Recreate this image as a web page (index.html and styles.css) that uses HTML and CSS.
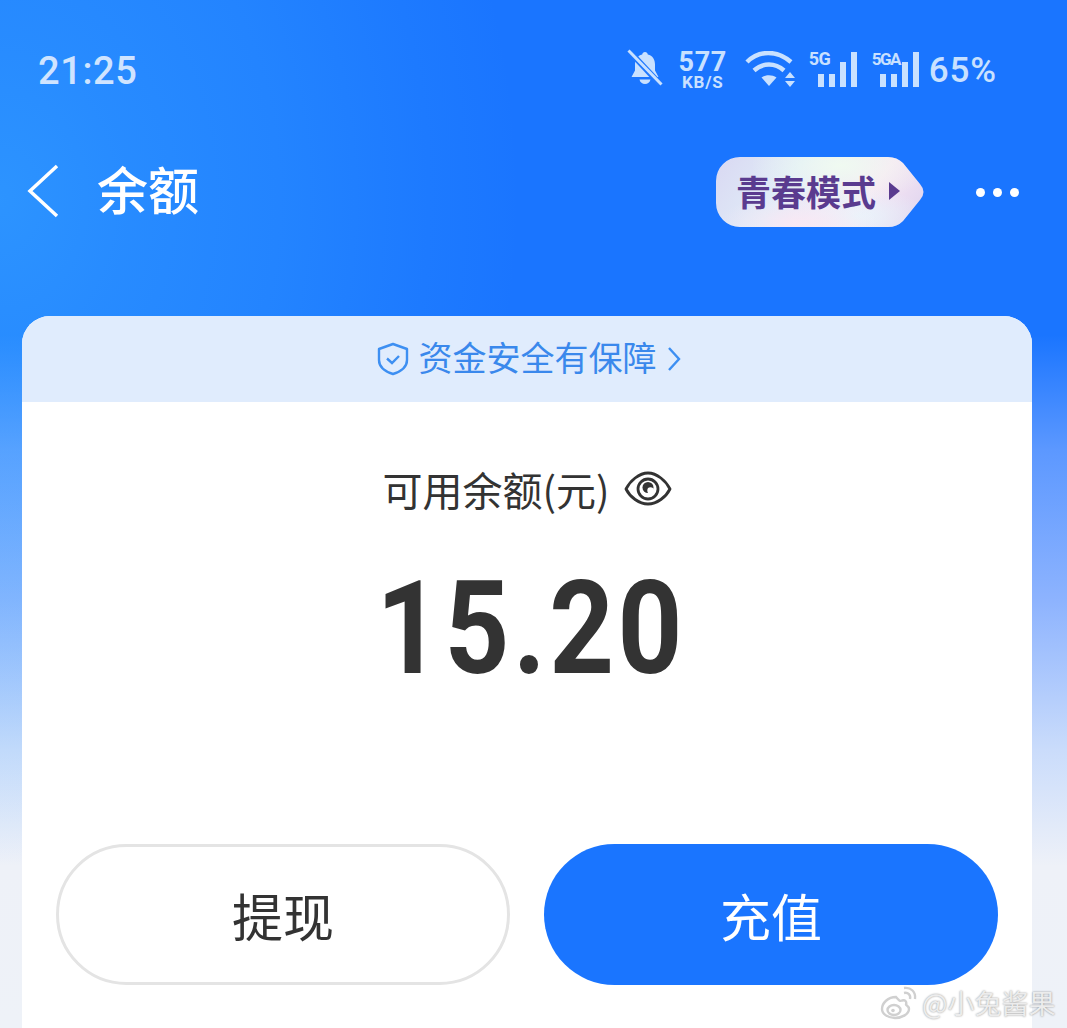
FILE: index.html
```html
<!DOCTYPE html>
<html lang="zh-CN">
<head>
<meta charset="utf-8">
<title>余额</title>
<link rel="stylesheet" href="styles.css">
</head>
<body>
<div class="screen">
  <header class="status">
    <div class="time">21:25</div>
    <div class="status-icons">
      <svg class="ic-bell" width="36" height="37" viewBox="0 0 36 37"><path d="M18 3c1.600 0 2.600 1 2.800 2.400 4.800 1.200 7.200 5 7.200 10v6l3.500 6.600H4.500L8 21.500v-6C8 10.400 10.500 6.600 15.200 5.400 15.400 4 16.400 3 18 3z" fill="#c9e1ff"/><path d="M12.500 30.500h11c-.6 2.800-2.700 4.500-5.500 4.500s-4.900-1.700-5.500-4.500z" fill="#c9e1ff"/><path d="M3 3l30 32" stroke="#1f78ff" stroke-width="6"/><path d="M1.500 1.500l33 34" stroke="#c9e1ff" stroke-width="3"/></svg>
      <div class="speed"><span class="speed-n">577</span><span class="speed-u">KB/S</span></div>
      <svg class="ic-wifi" width="52" height="36" viewBox="0 0 52 36"><path d="M3 11C15-1 33-1 47 11" class="wave"/><path d="M10 19.500c9-8 21-8 30 0" class="wave"/><path d="M25 35l-7.500-8.500c4.500-3 10.500-3 15 0z" fill="#c9e1ff"/><path d="M46 21l5 6H41zM46 36l5-6H41z" fill="#c9e1ff"/></svg>
      <div class="signal sig-5g"><span class="net">5G</span><div class="bars"><i class="b1"></i><i class="b2"></i><i class="b3"></i><i class="b4"></i></div></div>
      <div class="signal sig-5ga"><span class="net">5GA</span><div class="bars"><i class="b1"></i><i class="b2"></i><i class="b3"></i><i class="b4"></i></div></div>
      <div class="batt">65%</div>
    </div>
  </header>
  <nav class="nav">
    <svg class="back" width="32" height="54" viewBox="0 0 32 54"><path d="M30 2L3 27l27 25" fill="none" stroke="#fff" stroke-width="3.500"/></svg>
    <h1 class="title">余额</h1>
    <div class="spacer"></div>
    <div class="badge"><span class="badge-t">青春模式</span><span class="tri"></span></div>
    <div class="more"><i></i><i></i><i></i></div>
  </nav>
  <main class="card">
    <div class="safe">
      <svg width="32" height="34" viewBox="0 0 32 34"><path d="M16 2l14 5v11c0 7-6 11.500-14 14C8 29.500 2 25 2 18V7z" fill="none" stroke="#3d8ff2" stroke-width="2.400" stroke-linejoin="round"/><path d="M10 16.500l5 4.500 7-7" fill="none" stroke="#3d8ff2" stroke-width="2.400"/></svg>
      <span class="safe-t">资金安全有保障</span>
      <svg width="14" height="26" viewBox="0 0 14 26"><path d="M2 2l10 11L2 24" fill="none" stroke="#3d8ff2" stroke-width="2.400"/></svg>
    </div>
    <div class="label">
      <span>可用余额(元)</span>
      <svg width="48" height="38" viewBox="0 0 48 38"><path d="M2 19C6 11 15 3 24 3s18 8 22 16c-4 8-13 15-22 15S6 27 2 19z" fill="none" stroke="#333" stroke-width="2.800" stroke-linejoin="round"/><circle cx="24" cy="19" r="10" fill="none" stroke="#333" stroke-width="2.800"/><circle cx="24" cy="17.500" r="5.500" fill="#333"/><circle cx="26.500" cy="20.500" r="3.200" fill="#fff"/></svg>
    </div>
    <div class="amount"><span class="amount-n">15.20</span></div>
    <div class="actions">
      <button class="btn btn-o">提现</button>
      <button class="btn btn-p">充值</button>
    </div>
  </main>
  <div class="mark">
    <svg width="38" height="36" viewBox="0 0 38 36"><path d="M16 12C8 12 2 18 2 24c0 5 6 9 13 9s14-4 14-9c0-3-3-3.500-3-4.500 1-3-1-5-4-4-2 1-3 0-6-3.500z" fill="#fff" stroke="#d0d0d0" stroke-width="2.400"/><ellipse cx="14" cy="25" rx="6.500" ry="5" fill="none" stroke="#d0d0d0" stroke-width="2.400"/><circle cx="13" cy="25.500" r="1.800" fill="#d0d0d0"/><path d="M24 8c4-1 7 2 6 6M24 3c7-1 12 4 11 11" fill="none" stroke="#d0d0d0" stroke-width="2.400"/></svg>
    <span class="mark-t">@小兔酱果</span>
  </div>
</div>
</body>
</html>
```
FILE: styles.css
```css
* { box-sizing: border-box; margin: 0; padding: 0; }
html, body { width: 1067px; height: 1028px; overflow: hidden; }
body { font-family: "Noto Sans CJK SC", "Noto Sans", sans-serif; }
.screen {
  position: relative;
  width: 1067px; height: 1028px; overflow: hidden;
  display: flex; flex-direction: column;
  background:
    radial-gradient(520px 666px at 0 200px, rgba(70,190,255,.42) 0, rgba(70,190,255,.3) 25%, rgba(70,190,255,.2) 55%, rgba(70,190,255,.07) 82%, rgba(70,190,255,0) 100%),
    linear-gradient(180deg, #1a75ff 0, #1a75ff 335px, #5c98ff 450px, #8db3fe 600px, #cadcfb 750px, #eef1f8 866px, #eef2f8 1028px);
}
.status { height: 138px; padding: 47px 70px 0 38px; display: flex; justify-content: space-between; align-items: flex-start; color: #c9e1ff; }
.time { margin-top: 2px; font: 500 38px/44px Roboto, sans-serif; letter-spacing: .6px; color: #cfe4ff; }
.status-icons { display: flex; align-items: flex-start; padding-top: 4px; }
.ic-bell { margin-top: -2px; }
.speed { width: 48px; margin-left: 16px; display: flex; flex-direction: column; align-items: center; font-family: Roboto, sans-serif; font-weight: 700; }
.speed-n { font-size: 27px; line-height: 23px; letter-spacing: .6px; }
.speed-u { margin-top: 2px; font-size: 17px; line-height: 12px; letter-spacing: .8px; }
.ic-wifi { margin-left: 17px; }
.signal { position: relative; height: 36px; display: flex; align-items: flex-end; justify-content: flex-end; }
.sig-5g { width: 48px; margin-left: 13px; }
.sig-5ga { width: 47px; margin-left: 15px; }
.net { position: absolute; left: 0; top: -2px; font: 700 18px/20px Roboto, sans-serif; letter-spacing: -.5px; }
.sig-5ga .net { font-size: 17px; letter-spacing: -1.500px; }
.bars { display: flex; align-items: flex-end; gap: 5px; }
.bars i { display: block; width: 6px; background: #c9e1ff; }
.b1 { height: 13px; } .b2 { height: 13px; } .b3 { height: 25px; } .b4 { height: 35px; }
.wave { fill: none; stroke: #c9e1ff; stroke-width: 4.500; }
.batt { margin-left: 10px; font: 500 35px/40px Roboto, sans-serif; letter-spacing: .9px; }
.nav { height: 106px; padding: 2px 48px 0 27px; display: flex; align-items: center; }
.back { flex: none; margin-bottom: 2px; }
.title { margin: 0 0 8px 38px; font-size: 51px; line-height: 60px; font-weight: 500; color: #fff; }
.spacer { flex: 1; }
.badge {
  width: 208px; height: 70px; margin-right: 52px; padding: 0 0 3px 20px;
  display: flex; align-items: center; gap: 13px;
  clip-path: path('M24 0H172Q181 0 187 6L204 27Q211 35 204 43L187 64Q181 70 172 70H24A24 24 0 0 1 0 46V24A24 24 0 0 1 24 0Z');
  background:
    radial-gradient(90px 40px at 60% 12%, rgba(240,252,240,.9), rgba(240,252,240,0)),
    radial-gradient(80px 30px at 40% 95%, rgba(250,232,244,.9), rgba(250,232,244,0)),
    radial-gradient(70px 30px at 68% 85%, rgba(230,246,252,.9), rgba(230,246,252,0)),
    linear-gradient(125deg, #d9d8f2 0%, #e0ecf8 35%, #f8e6f4 70%, #dcd3ee 100%);
}
.badge-t { font-size: 35px; line-height: 40px; font-weight: 700; color: #5a3b8f; }
.tri { width: 0; height: 0; border-left: 11px solid #5a3b8f; border-top: 9px solid transparent; border-bottom: 9px solid transparent; }
.more { display: flex; gap: 8px; }
.more i { display: block; width: 9px; height: 9px; border-radius: 50%; background: #fff; }
.card { margin: 72px 35px 0 22px; background: #fff; border-radius: 28px 28px 0 0; flex: 1; overflow: hidden; display: flex; flex-direction: column; align-items: center; }
.safe { width: 100%; height: 86px; padding-left: 3px; background: #e0ecfd; display: flex; align-items: center; justify-content: center; gap: 10px; }
.safe-t { margin-bottom: 4px; font-size: 34px; line-height: 40px; color: #3a88ec; }
.label { margin-top: 64px; height: 46px; display: flex; align-items: center; gap: 14px; color: #333; font-size: 40px; }
.amount { margin-top: 42px; padding-left: 8px; height: 150px; font: 700 130px/150px Roboto, sans-serif; letter-spacing: 4px; color: #333; }
.amount-n { display: inline-block; transform: scaleX(.87); }
.actions { margin-top: 140px; width: 100%; padding: 0 34px; display: flex; justify-content: space-between; }
.btn { width: 454px; height: 141px; border-radius: 71px; font-family: inherit; font-size: 51px; }
.btn-o { background: #fff; border: 3px solid #e4e4e4; color: #333; }
.btn-p { background: #1a75ff; border: 0; color: #fff; }
.mark { position: absolute; left: 880px; top: 985px; display: flex; align-items: center; gap: 4px; }
.mark-t { color: #ececec; font-size: 27px; line-height: 36px; text-shadow: 0 0 2px rgba(0,0,0,.45); }
```
